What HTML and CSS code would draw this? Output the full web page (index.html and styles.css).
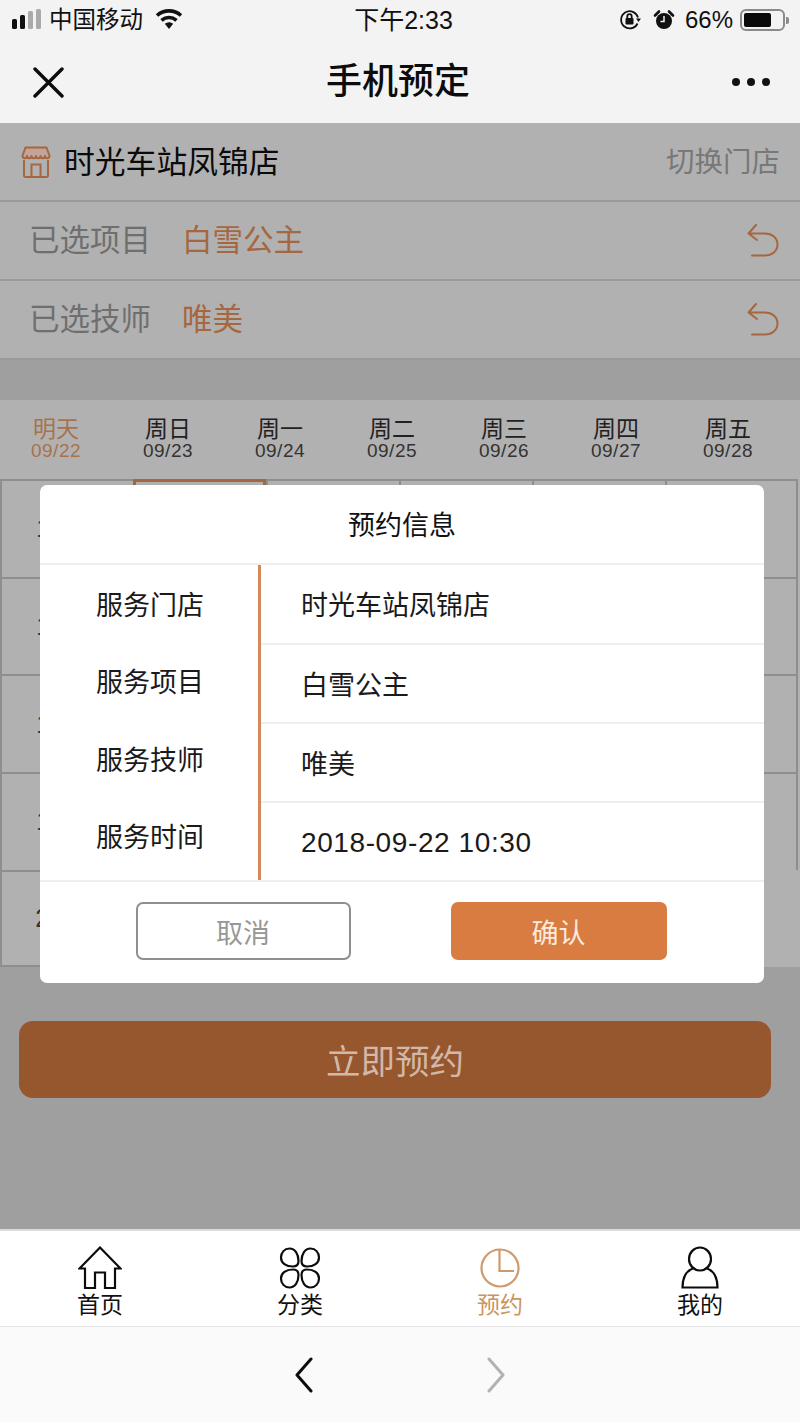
FILE: index.html
```html
<!DOCTYPE html>
<html lang="zh-CN">
<head>
<meta charset="utf-8">
<title>手机预定</title>
<link rel="stylesheet" href="styles.css">
</head>
<body>
<div class="app">
  <header class="head">
    <div class="status">
      <div class="status-left">
        <svg class="signal" width="32" height="24" viewBox="0 0 32 24"><rect x="0" y="11" width="5" height="10" rx="1.5" fill="#111"/><rect x="8" y="7" width="5" height="14" rx="1.5" fill="#111"/><rect x="16" y="3" width="5" height="18" rx="1.5" fill="#aaa"/><rect x="24" y="1" width="5" height="20" rx="1.5" fill="#aaa"/></svg>
        <span class="carrier">中国移动</span>
        <svg class="wifi" width="28" height="22" viewBox="0 0 28 22"><path class="wifi-arc" d="M2 7.5C9 1.3 19 1.3 26 7.5"/><path class="wifi-arc" d="M6.5 12.3C11 8.5 17 8.5 21.500 12.300"/><path d="M9.800 15.800C12.500 13.700 15.500 13.700 18.200 15.800L14 21Z" fill="#111"/></svg>
      </div>
      <div class="clock">下午2:33</div>
      <div class="status-right">
        <svg width="22" height="22" viewBox="0 0 22 22"><path class="thin" d="M18.500 14.500A8.600 8.600 0 1 1 19 8.500"/><path d="M17 9.500h5l-2.500 3.500z" fill="#111"/><rect x="6.500" y="9" width="8" height="6.500" rx="1" fill="#111"/><path class="thin" d="M8.300 9V7.400a2.200 2.200 0 0 1 4.400 0V9"/></svg>
        <svg class="alarm" width="22" height="22" viewBox="0 0 22 22"><circle cx="11" cy="12" r="8" fill="#111"/><path d="M2 6.500 6 2.500M20 6.500 16 2.500" stroke="#111" stroke-width="2.600" stroke-linecap="round"/><path d="M11 7v5.500H7.500" fill="none" stroke="#f3f3f3" stroke-width="1.500"/></svg>
        <span class="percent">66%</span>
        <div class="battery"><div class="battery-fill"></div></div>
        <div class="battery-nub"></div>
      </div>
    </div>
    <nav class="nav">
      <svg class="nav-close" width="32" height="32" viewBox="0 0 32 32"><path d="M3 3 30 30M30 3 3 30" stroke="#0c0c0c" stroke-width="3.400" stroke-linecap="round"/></svg>
      <h1 class="nav-title">手机预定</h1>
      <div class="nav-more"><i></i><i></i><i></i></div>
    </nav>
  </header>

  <main class="main">
    <div class="row store-row">
      <svg class="store-icon" width="30" height="32" viewBox="0 0 30 32"><path d="M4.500 1.500h21l3 8c0 3.500-4.500 3.500-4.500.5 0 3-4.500 3-4.500 0 0 3-4.500 3-4.500 0 0 3-4.500 3-4.500 0 0 3-4.500 3-4.500 0 0 3-4.500 3-4.500-.5z" fill="#c4a398" stroke="#a5673f" stroke-width="2" stroke-linejoin="round"/><path d="M3 14v15.500a1.500 1.500 0 0 0 1.500 1.500h21a1.500 1.500 0 0 0 1.500-1.500V14M10.500 31V18.500h9V31" fill="none" stroke="#a5673f" stroke-width="2"/></svg>
      <span class="store-name">时光车站凤锦店</span>
      <span class="store-switch">切换门店</span>
    </div>
    <div class="row pick-row">
      <span class="pick-label">已选项目</span>
      <span class="pick-value">白雪公主</span>
      <svg class="back-icon" width="32" height="33" viewBox="0 0 32 33"><path d="M9 1 1.500 9.500 10 16M1.500 9.500H18C25 9.500 30.500 14 30.500 20.500S25 31.500 18 31.500H5" fill="none" stroke="#a5673f" stroke-width="2" stroke-linecap="round" stroke-linejoin="round"/></svg>
    </div>
    <div class="row pick-row">
      <span class="pick-label">已选技师</span>
      <span class="pick-value">唯美</span>
      <svg class="back-icon" width="32" height="33" viewBox="0 0 32 33"><path d="M9 1 1.500 9.500 10 16M1.500 9.500H18C25 9.500 30.500 14 30.500 20.500S25 31.500 18 31.500H5" fill="none" stroke="#a5673f" stroke-width="2" stroke-linecap="round" stroke-linejoin="round"/></svg>
    </div>

    <div class="days">
      <div class="day day-active"><span class="day-name">明天</span><span class="day-date">09/22</span></div>
      <div class="day"><span class="day-name">周日</span><span class="day-date">09/23</span></div>
      <div class="day"><span class="day-name">周一</span><span class="day-date">09/24</span></div>
      <div class="day"><span class="day-name">周二</span><span class="day-date">09/25</span></div>
      <div class="day"><span class="day-name">周三</span><span class="day-date">09/26</span></div>
      <div class="day"><span class="day-name">周四</span><span class="day-date">09/27</span></div>
      <div class="day"><span class="day-name">周五</span><span class="day-date">09/28</span></div>
    </div>

    <div class="slots">
      <div class="slot">10:00</div><div class="slot slot-on"></div><div class="slot"></div><div class="slot"></div><div class="slot"></div><div class="slot"></div>
      <div class="slot">13:00</div><div class="slot"></div><div class="slot"></div><div class="slot"></div><div class="slot"></div><div class="slot"></div>
      <div class="slot">16:00</div><div class="slot"></div><div class="slot"></div><div class="slot"></div><div class="slot"></div><div class="slot"></div>
      <div class="slot">19:00</div><div class="slot"></div><div class="slot"></div><div class="slot"></div><div class="slot"></div><div class="slot"></div>
      <div class="slot slot-last">22:00</div>
    </div>

    <button class="book">立即预约</button>

    <section class="modal">
      <h2 class="modal-title">预约信息</h2>
      <div class="modal-body">
        <ul class="modal-keys">
          <li>服务门店</li>
          <li>服务项目</li>
          <li>服务技师</li>
          <li>服务时间</li>
        </ul>
        <ul class="modal-values">
          <li>时光车站凤锦店</li>
          <li>白雪公主</li>
          <li>唯美</li>
          <li class="modal-time">2018-09-22 10:30</li>
        </ul>
      </div>
      <div class="modal-actions">
        <button class="btn btn-cancel">取消</button>
        <button class="btn btn-ok">确认</button>
      </div>
    </section>
  </main>

  <footer class="tabs">
    <div class="tab">
      <svg width="44" height="44" viewBox="0 0 44 44"><path class="tab-line" d="M22 1.500 42.500 22.500H37V42H27V26.500H17V42H7V22.500H1.500Z"/></svg>
      <span class="tab-label">首页</span>
    </div>
    <div class="tab">
      <svg width="44" height="44" viewBox="0 0 44 44"><path class="tab-line" d="M11.500 2.500C6.500 2.500 3 6.500 3 11.500C3 17 8 20.500 15 20.500C19 20.500 20.500 19 20.500 15C20.500 8 17 2.500 11.500 2.500Z"/><path class="tab-line" d="M32.500 2.500C37.500 2.500 41 6.500 41 11.500C41 17 36 20.500 29 20.500C25 20.500 23.500 19 23.500 15C23.500 8 27 2.500 32.500 2.500Z"/><path class="tab-line" d="M11.500 41.500C6.500 41.500 3 37.500 3 32.500C3 27 8 23.500 15 23.500C19 23.500 20.500 25 20.500 29C20.500 36 17 41.500 11.500 41.500Z"/><path class="tab-line" d="M32.500 41.500C37.500 41.500 41 37.500 41 32.500C41 27 36 23.500 29 23.500C25 23.500 23.500 25 23.500 29C23.500 36 27 41.500 32.500 41.500Z"/></svg>
      <span class="tab-label">分类</span>
    </div>
    <div class="tab tab-on">
      <svg width="44" height="44" viewBox="0 0 44 44"><circle class="tab-line-on" cx="22" cy="22" r="18.500"/><path class="tab-line-on" d="M21.500 3.500V25H36"/></svg>
      <span class="tab-label">预约</span>
    </div>
    <div class="tab">
      <svg width="44" height="44" viewBox="0 0 44 44"><ellipse class="tab-line" cx="22" cy="13" rx="11" ry="11.500"/><path class="tab-line" d="M15 22.500C8 25 4.500 32 4.500 41.500H39.500C39.500 32 36 25 29 22.500"/></svg>
      <span class="tab-label">我的</span>
    </div>
  </footer>

  <div class="browser">
    <svg width="20" height="36" viewBox="0 0 20 36"><path d="M17 2 3 18 17 34" fill="none" stroke="#0c0c0c" stroke-width="3" stroke-linecap="round" stroke-linejoin="round"/></svg>
    <svg width="20" height="36" viewBox="0 0 20 36"><path d="M3 2 17 18 3 34" fill="none" stroke="#b2b2b2" stroke-width="3" stroke-linecap="round" stroke-linejoin="round"/></svg>
  </div>
</div>
</body>
</html>
```

FILE: styles.css
```css
* { box-sizing: border-box; }

html, body { margin: 0; padding: 0; }

body {
  font-family: "Liberation Sans", "Noto Sans CJK SC", sans-serif;
  color: #111;
  background: #a09fa0;
}

h1, h2, ul { margin: 0; padding: 0; }
li { list-style: none; }
button { font-family: inherit; margin: 0; }
svg { display: block; flex: none; }

.app {
  display: flex;
  flex-direction: column;
  width: 800px;
  height: 1422px;
  overflow: hidden;
}

/* header */
.head { background: #f3f3f3; }

.status {
  display: flex;
  align-items: center;
  justify-content: space-between;
  height: 40px;
  padding: 0 11px 0 12px;
  font-size: 24px;
}

.status-left { display: flex; align-items: center; width: 260px; }
.signal { margin: 0 5px 0 0; }
.carrier { font-size: 23.500px; margin-bottom: 4px; }
.wifi { margin-left: 12px; margin-top: -2px; }
.clock { width: 100px; font-size: 25px; margin: 0 0 4px -84px; text-align: center; white-space: nowrap; }
.status-right { display: flex; align-items: center; }
.status-right > svg { margin-right: 12px; }
.status-right .alarm { margin-right: 10px; }
.percent { margin-right: 7px; }

.thin { fill: none; stroke: #111; stroke-width: 1.800; }
.wifi-arc { fill: none; stroke: #111; stroke-width: 3.600; }

.battery {
  width: 45px;
  height: 22px;
  padding: 2px;
  border: 2px solid #8a8a8a;
  border-radius: 6px;
}
.battery-fill { width: 27px; height: 14px; background: #0a0a0a; border-radius: 2px; }
.battery-nub { width: 3px; height: 7px; margin-left: 1px; background: #8a8a8a; border-radius: 0 2px 2px 0; }

.nav {
  display: flex;
  align-items: center;
  justify-content: space-between;
  height: 83px;
  padding: 0 27px 0 32px;
}
.nav-title { font-size: 36px; font-weight: 500; line-height: 44px; color: #0c0c0c; }
.nav-more { display: flex; gap: 7px; width: 41px; }
.nav-more i { width: 8px; height: 8px; border-radius: 50%; background: #111; }

/* main, dimmed */
.main {
  position: relative;
  flex: 1;
  min-height: 0;
  background: #a09fa0;
}

.row {
  display: flex;
  align-items: center;
  height: 79px;
  background: #b2b1b1;
  border-bottom: 2px solid #9b9a9a;
}

.store-row { padding: 0 20px 0 21px; }
.store-icon { margin-right: 13px; }
.store-name { font-size: 30.800px; color: #0a0a0a; margin-bottom: 4px; }
.store-switch { margin-left: auto; margin-bottom: 4px; font-size: 28.500px; color: #787878; }

.pick-row { padding: 0 21px 0 29px; }
.pick-label { font-size: 30.500px; color: #6f6f6f; width: 153px; margin-bottom: 6px; }
.pick-value { font-size: 30.500px; color: #a5673f; margin-bottom: 6px; }
.back-icon { margin-left: auto; }

.days {
  display: flex;
  margin-top: 40px;
  height: 79px;
  padding-top: 16px;
  background: #b2b1b1;
}
.day { display: flex; flex-direction: column; align-items: center; width: 112px; }
.day-name { font-size: 23px; line-height: 26px; color: #222; }
.day-date { font-size: 19px; line-height: 20px; letter-spacing: .5px; color: #333; margin-top: -1px; }
.day-active .day-name, .day-active .day-date { color: #a8714d; }

.slots {
  display: grid;
  grid-template-columns: repeat(6, 133px);
  grid-auto-rows: 97.700px;
  width: 800px;
  background: #b2b1b1;
}
.slot {
  display: flex;
  align-items: center;
  justify-content: center;
  border-top: 2px solid #8f8e8e;
  border-left: 2px solid #8f8e8e;
  font-size: 25px;
  color: #333;
}
.slot:nth-child(6n) { border-right: 2px solid #8f8e8e; }
.slot-on { border: 3px solid #a5673f; color: #a5673f; }
.slot-last { border-bottom: 2px solid #8f8e8e; border-right: 2px solid #8f8e8e; }

.book {
  display: block;
  width: 752px;
  height: 77px;
  margin: 54px 0 0 19px;
  border: 0;
  border-radius: 14px;
  background: #96562e;
  color: #d2b8a8;
  font-size: 34.500px;
  padding: 0 0 2px;
}

/* modal */
.modal {
  position: absolute;
  left: 40px;
  top: 362px;
  width: 724px;
  height: 498px;
  background: #fff;
  border-radius: 7px;
}
.modal-title {
  height: 80px;
  padding-top: 21px;
  border-bottom: 2px solid #eeeeee;
  font-size: 27px;
  font-weight: 400;
  line-height: 40px;
  text-align: center;
  color: #111;
}
.modal-body { display: flex; height: 317px; border-bottom: 2px solid #eeeeee; }
.modal-keys {
  width: 221px;
  padding: 3px 0 0 56px;
  border-right: 3px solid #d28a5b;
  font-size: 27px;
  line-height: 77.400px;
  color: #1a1a1a;
}
.modal-values { flex: 1; padding-top: 1px; font-size: 27px; color: #1a1a1a; }
.modal-values li {
  display: flex;
  align-items: center;
  height: 79px;
  padding-left: 40px;
  border-bottom: 2px solid #eeeeee;
}
.modal-values li:first-child { padding-bottom: 2px; }
.modal-values li:last-child { border-bottom: 0; }
.modal-values .modal-time { letter-spacing: .6px; font-size: 28px; }

.modal-actions {
  display: flex;
  justify-content: center;
  gap: 100px;
  padding: 20px 2px 0 0;
}
.btn {
  width: 215px;
  height: 58px;
  border-radius: 7px;
  font-size: 27px;
  padding: 0;
}
.btn-cancel { background: #fff; border: 2px solid #8f8f8f; color: #979797; }
.btn-ok { width: 216px; background: #d87c42; border: 0; color: #fbeadd; }

/* tab bar */
.tabs {
  display: flex;
  height: 98px;
  padding-top: 15px;
  background: #fff;
  border-top: 2px solid #dcdcdc;
  border-bottom: 1px solid #e4e4e4;
}
.tab { display: flex; flex-direction: column; align-items: center; width: 200px; }
.tab-label { margin-top: 2px; font-size: 23px; line-height: 26px; color: #111; }
.tab-on .tab-label { color: #c9965f; }
.tab-line { fill: none; stroke: #0c0c0c; stroke-width: 2.200; stroke-linejoin: miter; }
.tab-line-on { fill: none; stroke: #cf9a6b; stroke-width: 2.200; }

.browser {
  display: flex;
  align-items: center;
  justify-content: center;
  gap: 172px;
  height: 95px;
  background: #fbfafb;
}
```
